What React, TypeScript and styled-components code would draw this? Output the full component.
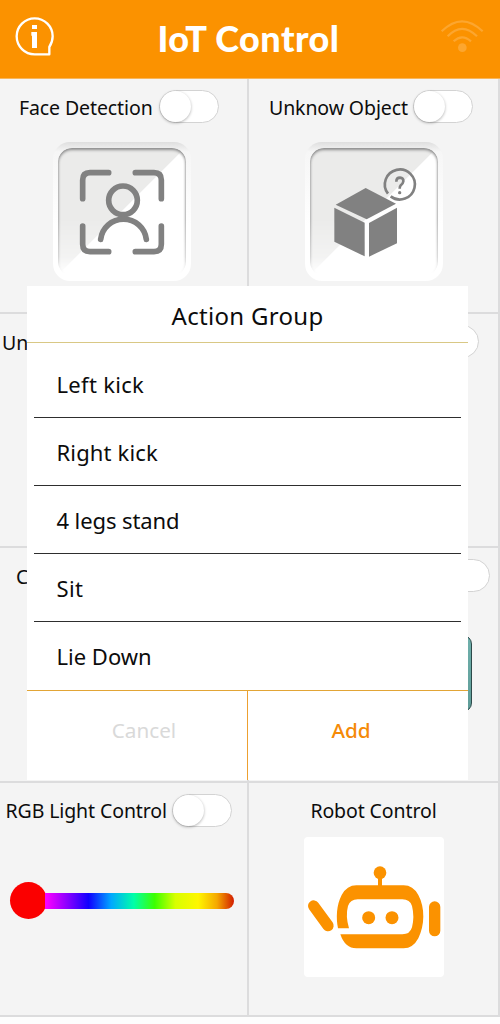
import React from "react";
import styled, { createGlobalStyle } from "styled-components";

const ORANGE = "#fb9200";

const GlobalStyle = createGlobalStyle`
  *, *::before, *::after { box-sizing: border-box; }
  body {
    margin: 0;
    background: #fdfdfd;
    color: #0c0c0c;
    font-family: "Noto Sans", "Open Sans", sans-serif;
  }
  svg { display: block; }
`;

const Screen = styled.div`
  position: relative;
  width: 500px;
  height: 1024px;
  overflow: hidden;
  background: #fdfdfd;
`;

const Header = styled.header`
  display: flex;
  align-items: center;
  justify-content: space-between;
  height: 79px;
  padding: 0 16px 6px 13px;
  background: ${ORANGE};
  border-bottom: 1px solid #f7b65c;
`;

const Title = styled.h1`
  margin: 4px 0 0;
  color: #fff;
  font-family: Lato, "Noto Sans", sans-serif;
  font-size: 36px;
  font-weight: 900;
  line-height: 44px;
  letter-spacing: 0.45px;
  white-space: nowrap;
`;

const Grid = styled.main`
  display: grid;
  grid-template-columns: 249px 251px;
  grid-template-rows: 235px 234px 235px 234px;
`;

const Cell = styled.section`
  display: flex;
  flex-direction: column;
  padding-top: 11px;
  background: #f4f4f4;
  border-right: 2px solid #dcdcdd;
  border-bottom: 2px solid #dcdcdd;
`;

const CellHead = styled.div<{ $left: number; $right: number }>`
  display: flex;
  align-items: center;
  justify-content: space-between;
  height: 33px;
  padding: 0 ${(p) => p.$right}px 0 ${(p) => p.$left}px;
`;

const Label = styled.span<{ $top?: number }>`
  padding-top: ${(p) => p.$top ?? 2}px;
  font-size: 19.5px;
  line-height: 32px;
  letter-spacing: -0.1px;
  white-space: nowrap;
`;

const Toggle = styled.span`
  flex: none;
  width: 60px;
  height: 33px;
  border: 1px solid #d3d3d3;
  border-radius: 17px;
  background: #fff;

  &::before {
    content: "";
    display: block;
    width: 31px;
    height: 31px;
    border-radius: 50%;
    background: #fff;
    box-shadow: 0 1px 3px rgba(0, 0, 0, 0.3);
  }
`;

const Tile = styled.div<{ $left: number }>`
  width: 138px;
  height: 139px;
  margin: 19px 0 0 ${(p) => p.$left}px;
  padding: 6px 5px;
  border-radius: 17px;
  background: linear-gradient(#dedede, #f6f6f6 7%, #fff 60%);
`;

const TileFace = styled.div`
  position: relative;
  width: 128px;
  height: 128px;

  &::before {
    content: "";
    position: absolute;
    inset: 0;
    border-radius: 14px;
    background: linear-gradient(135deg, #ebebea 49.3%, #fff 49.8%);
    box-shadow: inset 0 2px 3px #8c8c8c, inset 1px 0 2px #cfcfcf, inset -1px 0 2px #dadada;
    mask-image: linear-gradient(#000 55%, rgba(0, 0, 0, 0.6) 85%, transparent 98%);
  }

  svg { position: relative; }
`;

const Photo = styled.div`
  width: 80px;
  height: 77px;
  margin: 43px 0 0 143px;
  border: 1px solid #2c4a4a;
  border-radius: 9px;
  background: linear-gradient(#6fb0ac, #5f9c98);
`;

const Slider = styled.div`
  display: flex;
  align-items: center;
  width: 224px;
  height: 37px;
  margin: 55px 0 0 10px;
`;

const SliderKnob = styled.span`
  flex: none;
  width: 37px;
  height: 37px;
  border-radius: 50%;
  background: #fb0000;
`;

const SliderTrack = styled.span`
  flex: 1;
  height: 16px;
  margin-left: -2px;
  border-radius: 0 8px 8px 0;
  background: linear-gradient(
    90deg,
    #f800ff 1%,
    #7d00ff 13%,
    #1000ff 23%,
    #00a8ff 35%,
    #00ffa8 47%,
    #3cff00 58%,
    #d8ff00 69%,
    #fff600 81%,
    #f5a800 91%,
    #d21c00 100%
  );
`;

const RobotHead = styled.div`
  display: flex;
  justify-content: center;
  height: 33px;
`;

const RobotCard = styled.div`
  width: 140px;
  height: 140px;
  margin: 10px 0 0 55px;
  border-radius: 4px;
  background: #fff;
  overflow: hidden;
`;

const Dialog = styled.div`
  position: absolute;
  left: 27px;
  top: 286px;
  display: flex;
  flex-direction: column;
  width: 441px;
  height: 494px;
  background: #fff;
`;

const DialogTitle = styled.h2`
  height: 57px;
  margin: 0;
  padding-top: 1px;
  border-bottom: 1px solid #d9c885;
  font-size: 24px;
  font-weight: 400;
  line-height: 58px;
  letter-spacing: 0.3px;
  text-align: center;
`;

const List = styled.ul`
  height: 347px;
  margin: 0;
  padding: 7px 7px 0;
  list-style: none;
`;

const Item = styled.li<{ $spacing: number }>`
  height: 68px;
  padding: 1px 0 0 22.5px;
  font-size: 22px;
  line-height: 67px;
  letter-spacing: ${(p) => p.$spacing}px;
  border-bottom: 1px solid #2e2e2e;

  &:last-child { border-bottom: 0; }
`;

const Actions = styled.div`
  display: grid;
  grid-template-columns: 220px 1px 1fr;
  flex: 1;
  border-top: 1px solid #e2a536;
`;

const ActionDivider = styled.span`
  background: #eda030;
`;

const ActionButton = styled.button<{ $color: string; $left: number; $right: number; $weight: number }>`
  padding: 0 ${(p) => p.$right}px 11px ${(p) => p.$left}px;
  border: 0;
  background: none;
  color: ${(p) => p.$color};
  font: ${(p) => p.$weight} 20.7px "Noto Sans", sans-serif;
`;

const InfoIcon = () => (
  <svg width="44" height="44" viewBox="39 42 132 132" fill="none">
    <path
      d="M148 163 H104 A54 54 0 1 1 158 109 Q158 126 148 141 Z"
      stroke="#fff"
      strokeWidth="7"
      strokeLinejoin="round"
    />
    <path d="M96 75h15v12H96z M94 96h17v48H96v-37h-2z" fill="#fff" />
  </svg>
);

const WifiIcon = () => (
  <svg width="44" height="36" viewBox="567 56 132 108" fill="none" stroke="#fca62f" strokeWidth="6.5">
    <path d="M572 96 Q633 36 695 96" />
    <path d="M590 111 Q633 66 678 111" />
    <path d="M608 126 Q633 102 660 126" />
    <circle cx="634" cy="145" r="13" fill="#fca62f" stroke="none" />
  </svg>
);

const FaceIcon = () => (
  <svg width="128" height="128" viewBox="54 54 384 384" fill="none" stroke="#818181" strokeWidth="17" strokeLinecap="round">
    <path d="M128 206V150Q128 128 150 128H206" />
    <path d="M286 128H342Q364 128 364 150V206" />
    <path d="M128 288V343Q128 365 150 365H206" />
    <path d="M286 365H342Q364 365 364 343V288" />
    <circle cx="249" cy="211" r="43" fill="none" />
    <path d="M182 328A69 69 0 0 1 319 328" />
  </svg>
);

const CubeIcon = () => (
  <svg width="128" height="128" viewBox="45 54 384 384" fill="#818181">
    <path d="M212 174 303 221 215 268 122 224Z" />
    <path d="M118 233 209 278V379L118 335Z" />
    <path d="M306 233V340L222 380V279Z" />
    <g fill="none" stroke="#818181" strokeWidth="8">
      <path d="M279 191A45 45 0 1 1 287 199" />
      <path d="M304 155Q304 143 315 143Q326 144 325 154Q324 161 317 166Q314 169 314 176" />
    </g>
    <circle cx="314" cy="188" r="5" />
  </svg>
);

const RobotIcon = () => (
  <svg width="140" height="140" viewBox="27 170 420 420" fill={ORANGE}>
    <circle cx="255" cy="277" r="19" />
    <path d="M249 290h12v30h-12z" />
    <path d="M129 444C123 413 124 374 140 344Q156 315 184 315H326Q354 315 370 344C391 383 389 436 370 474Q354 504 326 504H184Q150 504 136 462H322Q345 462 351 441Q359 409 351 377Q345 357 322 357H188Q166 357 159 377Q151 407 162 444Z" />
    <circle cx="221" cy="412" r="19.5" />
    <circle cx="291" cy="412" r="19.5" />
    <path d="M56 377 99 436M419 380V451" stroke={ORANGE} strokeWidth="34" strokeLinecap="round" />
  </svg>
);

const actions = [
  { name: "Left kick", spacing: 0.3 },
  { name: "Right kick", spacing: 0.15 },
  { name: "4 legs stand", spacing: -0.1 },
  { name: "Sit", spacing: 0.4 },
  { name: "Lie Down", spacing: 0 },
];

export default function App() {
  return (
    <Screen>
      <GlobalStyle />
      <Header>
        <InfoIcon />
        <Title>IoT Control</Title>
        <WifiIcon />
      </Header>
      <Grid>
        <Cell>
          <CellHead $left={19} $right={28}>
            <Label>Face Detection</Label>
            <Toggle />
          </CellHead>
          <Tile $left={53}>
            <TileFace><FaceIcon /></TileFace>
          </Tile>
        </Cell>
        <Cell>
          <CellHead $left={20} $right={25}>
            <Label>Unknow Object</Label>
            <Toggle />
          </CellHead>
          <Tile $left={56}>
            <TileFace><CubeIcon /></TileFace>
          </Tile>
        </Cell>
        <Cell>
          <CellHead $left={2} $right={28}>
            <Label>Un</Label>
          </CellHead>
        </Cell>
        <Cell>
          <CellHead $left={20} $right={19}>
            <span />
            <Toggle />
          </CellHead>
        </Cell>
        <Cell>
          <CellHead $left={16} $right={28}>
            <Label>C</Label>
          </CellHead>
        </Cell>
        <Cell>
          <CellHead $left={20} $right={8}>
            <span />
            <Toggle />
          </CellHead>
          <Photo />
        </Cell>
        <Cell>
          <CellHead $left={5.5} $right={15}>
            <Label $top={0}>RGB Light Control</Label>
            <Toggle />
          </CellHead>
          <Slider>
            <SliderKnob />
            <SliderTrack />
          </Slider>
        </Cell>
        <Cell>
          <RobotHead>
            <Label $top={1}>Robot Control</Label>
          </RobotHead>
          <RobotCard><RobotIcon /></RobotCard>
        </Cell>
      </Grid>
      <Dialog role="dialog">
        <DialogTitle>Action Group</DialogTitle>
        <List>
          {actions.map((a) => (
            <Item key={a.name} $spacing={a.spacing}>{a.name}</Item>
          ))}
        </List>
        <Actions>
          <ActionButton $color="#d9d9d9" $left={14} $right={0} $weight={400}>Cancel</ActionButton>
          <ActionDivider />
          <ActionButton $color="#f58a07" $left={0} $right={14} $weight={500}>Add</ActionButton>
        </Actions>
      </Dialog>
    </Screen>
  );
}
